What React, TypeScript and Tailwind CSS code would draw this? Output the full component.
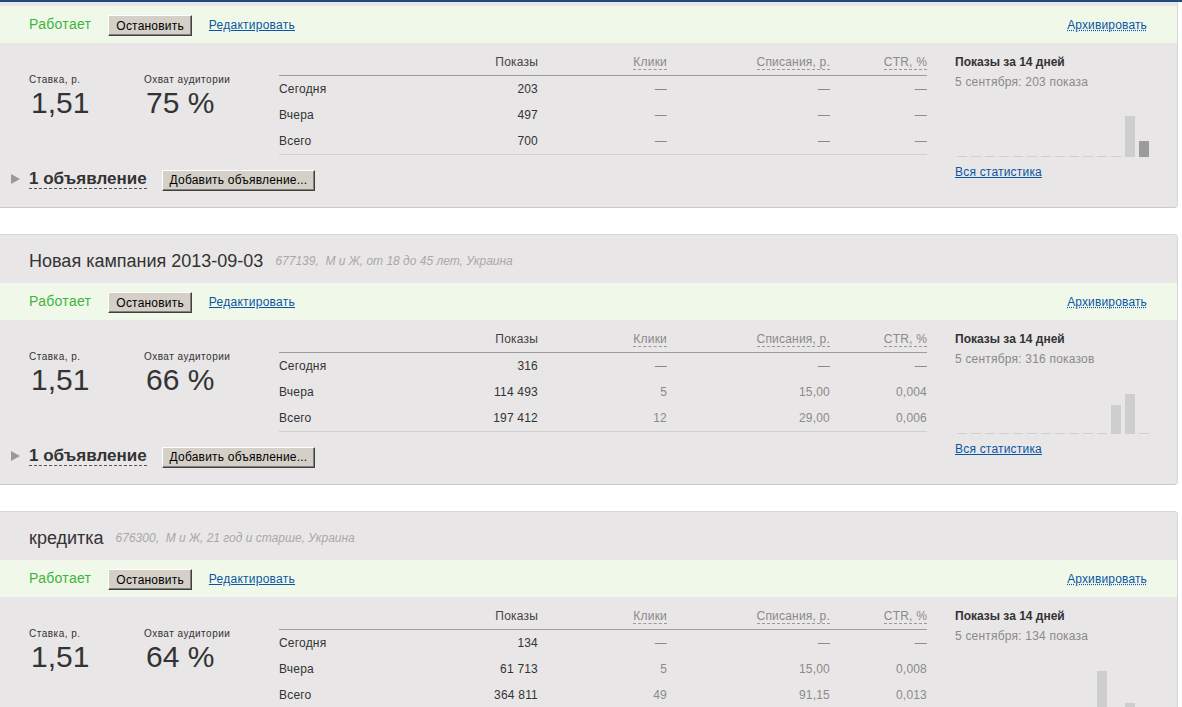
import React from 'react';

type Bar = { h: number; dark?: boolean };

type Campaign = {
  title: string;
  meta: string;
  rate: string;
  reach: string;
  rows: string[][];
  day: string;
  bars: Bar[];
};

const dashes = (n: number): Bar[] => Array.from({ length: n }, () => ({ h: 0 }));

const campaigns: Campaign[] = [
  {
    title: 'Кампания 2013-09-02',
    meta: '677120,  М и Ж, от 18 до 45 лет, Украина',
    rate: '1,51',
    reach: '75 %',
    rows: [
      ['Сегодня', '203', '—', '—', '—'],
      ['Вчера', '497', '—', '—', '—'],
      ['Всего', '700', '—', '—', '—'],
    ],
    day: '5 сентября: 203 показа',
    bars: [...dashes(12), { h: 41 }, { h: 16, dark: true }],
  },
  {
    title: 'Новая кампания 2013-09-03',
    meta: '677139,  М и Ж, от 18 до 45 лет, Украина',
    rate: '1,51',
    reach: '66 %',
    rows: [
      ['Сегодня', '316', '—', '—', '—'],
      ['Вчера', '114 493', '5', '15,00', '0,004'],
      ['Всего', '197 412', '12', '29,00', '0,006'],
    ],
    day: '5 сентября: 316 показов',
    bars: [...dashes(11), { h: 29 }, { h: 40 }, { h: 0 }],
  },
  {
    title: 'кредитка',
    meta: '676300,  М и Ж, 21 год и старше, Украина',
    rate: '1,51',
    reach: '64 %',
    rows: [
      ['Сегодня', '134', '—', '—', '—'],
      ['Вчера', '61 713', '5', '15,00', '0,008'],
      ['Всего', '364 811', '49', '91,15', '0,013'],
    ],
    day: '5 сентября: 134 показа',
    bars: [...dashes(10), { h: 40 }, { h: 0 }, { h: 8 }, { h: 0 }],
  },
];

const Button = ({ children }: { children: React.ReactNode }) => (
  <button className="h-[21px] px-[7px] bg-[#d4d0c8] border-t border-l border-t-white border-l-white border-r border-b border-r-[#404040] border-b-[#404040] shadow-[inset_-1px_-1px_0_#808080] text-[12px] tracking-[0.2px] leading-none text-black">
    {children}
  </button>
);

const CampaignCard = ({ c }: { c: Campaign }) => (
  <div className="mr-[4px] bg-[#e8e6e7] border border-l-0 border-[#d6d6d6] border-b-[#c9c9c9] rounded-r-[4px]">
    <div className="h-[48px] pt-1 pl-[29px] flex items-center gap-[12px]">
      <span className="text-[18px] text-[#333]">{c.title}</span>
      <span className="text-[12px] italic text-[#a8a8a8] whitespace-pre">{c.meta}</span>
    </div>

    <div className="h-[37px] bg-[#f0f9e9] flex items-center pl-[29px] pr-[30px]">
      <span className="text-[14px] tracking-[0.3px] text-[#3db43d]">Работает</span>
      <span className="ml-[17px]">
        <Button>Остановить</Button>
      </span>
      <a className="ml-[17px] text-[12px] tracking-[0.25px] text-[#0b56a3] underline">Редактировать</a>
      <a className="ml-auto text-[12px] tracking-[0.15px] text-[#0b56a3] underline decoration-dotted">Архивировать</a>
    </div>

    <div className="h-[164px] flex">
      <div className="w-[927px] flex flex-col">
        <div className="flex pt-[11px]">
          <div className="w-[279px] pl-[29px] pt-[20px] flex">
            <div className="w-[115px]">
              <div className="text-[10px] tracking-[0.5px] text-[#333] leading-[12px]">Ставка, р.</div>
              <div className="text-[30px] leading-[34px] text-[#333] pl-[2px]">{c.rate}</div>
            </div>
            <div>
              <div className="text-[10px] tracking-[0.5px] text-[#333] leading-[12px]">Охват аудитории</div>
              <div className="text-[30px] leading-[34px] text-[#333] pl-[2px]">{c.reach}</div>
            </div>
          </div>

          <div className="w-[648px] text-[12px] tracking-[0.2px]">
            <div className="grid grid-cols-[160px_99px_129px_163px_97px] h-[22px] border-b border-[#9c9c9c] leading-[16px]">
              <span />
              <span className="text-right text-[#444]">Показы</span>
              <span className="text-right text-[#8a8a8a]">
                <span className="border-b border-dashed border-[#999]">Клики</span>
              </span>
              <span className="text-right text-[#8a8a8a]">
                <span className="border-b border-dashed border-[#999]">Списания, р.</span>
              </span>
              <span className="text-right text-[#8a8a8a]">
                <span className="border-b border-dashed border-[#999]">CTR, %</span>
              </span>
            </div>
            <div className="border-b border-[#d0d0d0]">
              {c.rows.map((r, i) => (
                <div
                  key={i}
                  className="grid grid-cols-[160px_99px_129px_163px_97px] h-[26px] items-center"
                >
                  <span className="text-[#333]">{r[0]}</span>
                  <span className="text-right text-[#333]">{r[1]}</span>
                  <span className="text-right text-[#8a8a8a]">{r[2]}</span>
                  <span className="text-right text-[#8a8a8a]">{r[3]}</span>
                  <span className="text-right text-[#8a8a8a]">{r[4]}</span>
                </div>
              ))}
            </div>
          </div>
        </div>

        <div className="mt-[12px] pl-[11px] flex items-center">
          <svg width="9" height="10" viewBox="0 0 9 10" className="mr-[9px]">
            <path d="M0 0 L9 5 L0 10 Z" fill="#999" />
          </svg>
          <span className="text-[17px] font-bold text-[#333] leading-[19px] border-b border-dashed border-[#555]">
            1 объявление
          </span>
          <span className="ml-[15px]">
            <Button>Добавить объявление...</Button>
          </span>
        </div>
      </div>

      <div className="pl-[28px] pt-[11px]">
        <div className="text-[12px] font-bold text-[#333] leading-[16px]">Показы за 14 дней</div>
        <div className="mt-[4px] text-[12px] tracking-[0.2px] text-[#8a8a8a] leading-[16px]">{c.day}</div>
        <div className="mt-[16px] h-[51px] pl-[2px] flex items-end gap-[4px]">
          {c.bars.map((b, i) => (
            <div
              key={i}
              className={b.h === 0 ? 'w-[10px] h-px bg-[#cfcfcf]' : b.dark ? 'w-[10px] bg-[#9b9b9b]' : 'w-[10px] bg-[#cecece]'}
              style={b.h ? { height: b.h } : undefined}
            />
          ))}
        </div>
        <a className="block mt-[7px] text-[12px] tracking-[0.2px] text-[#0b56a3] underline leading-[16px]">Вся статистика</a>
      </div>
    </div>
  </div>
);

export default function App() {
  return (
    <div className="relative h-[707px] overflow-hidden bg-white font-['Liberation_Sans',Arial,sans-serif]">
      <div className="absolute top-0 left-0 right-0 h-[2px] bg-[#1d4a7f] z-10" />
      <div className="-mt-[43px] flex flex-col gap-[26px]">
        {campaigns.map((c, i) => (
          <CampaignCard key={i} c={c} />
        ))}
      </div>
    </div>
  );
}
